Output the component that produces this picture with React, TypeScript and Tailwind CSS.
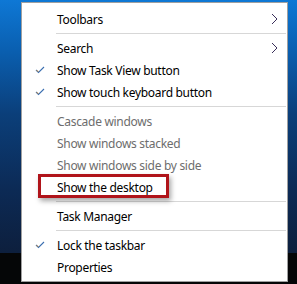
import { ReactNode } from 'react'

type Item =
  | { kind: 'sep' }
  | { kind: 'row'; label: string; checked?: boolean; disabled?: boolean; submenu?: boolean; highlight?: boolean }

const ITEMS: Item[] = [
  { kind: 'row', label: 'Toolbars', submenu: true },
  { kind: 'sep' },
  { kind: 'row', label: 'Search', submenu: true },
  { kind: 'row', label: 'Show Task View button', checked: true },
  { kind: 'row', label: 'Show touch keyboard button', checked: true },
  { kind: 'sep' },
  { kind: 'row', label: 'Cascade windows', disabled: true },
  { kind: 'row', label: 'Show windows stacked', disabled: true },
  { kind: 'row', label: 'Show windows side by side', disabled: true },
  { kind: 'row', label: 'Show the desktop', highlight: true },
  { kind: 'sep' },
  { kind: 'row', label: 'Task Manager' },
  { kind: 'sep' },
  { kind: 'row', label: 'Lock the taskbar', checked: true },
  { kind: 'row', label: 'Properties' },
]

function Check() {
  return (
    <svg width="10" height="8" viewBox="0 0 10 8" className="block">
      <polyline points="1,4 3.5,6.5 9,1" fill="none" stroke="#3b6fb0" strokeWidth="1.1" />
      <polyline points="1.5,4 3.5,6" fill="none" stroke="#d98a2b" strokeWidth="0.8" />
    </svg>
  )
}

function Chevron() {
  return (
    <svg width="7" height="12" viewBox="0 0 7 12" className="block">
      <polyline points="1,1 6,6 1,11" fill="none" stroke="#3a2f5a" strokeWidth="1" />
    </svg>
  )
}

function Row({ item }: { item: Extract<Item, { kind: 'row' }> }) {
  const body: ReactNode = (
    <span className={item.disabled ? 'text-[#6d6d6d]' : 'text-black'}>{item.label}</span>
  )
  return (
    <div className="relative flex h-[22px] items-center">
      <div className="flex w-[35px] items-center pl-[13px]">{item.checked && <Check />}</div>
      <div className="flex-1 pt-[1px]">{body}</div>
      <div className="flex w-[16px] items-center">{item.submenu && <Chevron />}</div>
      {item.highlight && (
        <div className="pointer-events-none absolute left-[16px] top-[-2px] h-[24px] w-[131px] border-[3px] border-[#b0141a] shadow-[2px_3px_5px_rgba(0,0,0,0.35)]" />
      )}
    </div>
  )
}

export default function App() {
  return (
    <div
      className="relative h-[284px] w-[297px] overflow-hidden"
      style={{ fontFamily: '"Noto Sans", "Open Sans", sans-serif' }}
    >
      <div className="flex h-full flex-col">
        <div className="h-[253px] bg-[linear-gradient(180deg,#0e78d5_0%,#0a5fb0_20%,#0b3f7a_45%,#0c2a55_75%,#0d1f3d_100%)]" />
        <div className="flex-1 bg-[#050607]" />
      </div>

      <div className="absolute left-[21px] top-[2px] w-[267px] border border-[#a0a0a0] bg-white pb-[3px] pt-[5px] text-[12px] leading-none tracking-[-0.3px]">
        {ITEMS.map((item, i) =>
          item.kind === 'sep' ? (
            <div key={i} className="flex h-[7px] items-center pl-[34px] pr-[1px]">
              <div className="h-px flex-1 bg-[#d7d7d7]" />
            </div>
          ) : (
            <Row key={i} item={item} />
          ),
        )}
      </div>
    </div>
  )
}
